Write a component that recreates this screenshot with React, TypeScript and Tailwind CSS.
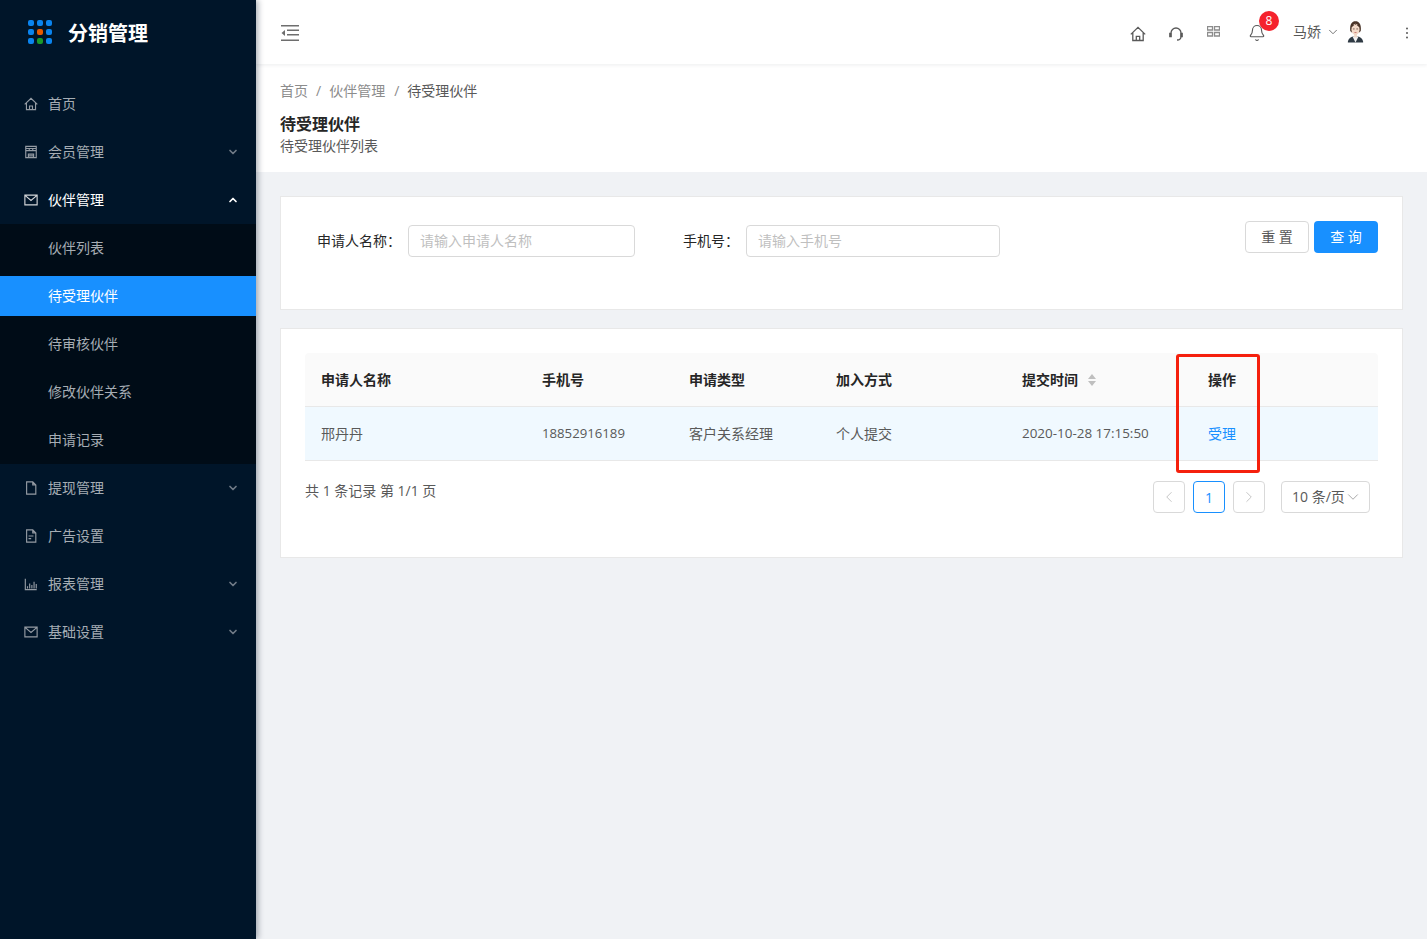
import React from "react";
import { ChevronDown, ChevronUp, ChevronLeft, ChevronRight, Bell } from "lucide-react";

const FONT = { fontFamily: '"Open Sans","Noto Sans CJK SC","Liberation Sans",sans-serif' };

function Glyph({ d, size = 16 }: { d: string; size?: number }) {
  return (
    <svg width={size} height={size} viewBox="0 0 16 16" fill="none" stroke="currentColor" strokeWidth="1.3" strokeLinejoin="miter">
      <path d={d} />
    </svg>
  );
}

const ICONS = {
  home: "M0.8 8.4L8 1.4l7.2 7M2.8 6.8v7.7h10.4V6.8M6.3 14.5v-4.2h3.4v4.2",
  store: "M2 1.5h12v5H2zM2 6.5v8h12v-8M2 4h12M5 14.5v-4h6v4M5 12.5h6M6 6.5v-2.500M10 6.500V4",
  mail: "M1 2.500h14v11H1zM1.500 3l6.500 5.500L14.500 3",
  file: "M3 1h7l3.500 3.500V15H3zM10 1v3.500h3.500",
  doc: "M3 1h7l3.500 3.500V15H3zM10 1v3.500h3.500M5.200 8h5.600M5.200 11h3",
  chart: "M1.500 2v12.500h13M4 13v-2.500M6.500 13V7.500M9 13V9M11.500 13V5.500M14 13V8",
  headset: "M3 9.500V7a5 5 0 0 1 10 0v3.500M13 10.500c0 2-1.500 3.500-4 3.500M1.800 7.500h1.400v3H1.800zM12.800 7.500h1.400v3h-1.400z",
};

function Item({ d, label, chevron, active }: { d: string; label: string; chevron?: "up" | "down"; active?: boolean }) {
  return (
    <div className={`h-12 flex items-center pl-6 pr-[17px] text-[14px] ${active ? "text-white" : "text-[#a6adb4]"}`}>
      <span className={`w-[14px] h-[14px] mr-[10px] flex items-center justify-center shrink-0 ${active ? "text-[#d4d7da]" : "text-[#959ca4]"}`}>
        <Glyph d={d} />
      </span>
      <span className="flex-1 pb-[2px]">{label}</span>
      {chevron === "down" && <ChevronDown size={12} strokeWidth={3.4} className="text-[#6f7a86]" />}
      {chevron === "up" && <ChevronUp size={12} strokeWidth={3.4} className="text-white" />}
    </div>
  );
}

function Sub({ label, selected }: { label: string; selected?: boolean }) {
  return (
    <div className={`h-10 my-1 flex items-center pl-12 pb-[2px] text-[14px] ${selected ? "bg-[#1890ff] text-white" : "text-[#a6adb4]"}`}>{label}</div>
  );
}

function Logo() {
  const colors = ["#0a84ee", "#0a84ee", "#0a84ee", "#0a84ee", "#e85a00", "#0a84ee", "#0a84ee", "#1a9a2a", "#0a84ee"];
  return (
    <div className="grid grid-cols-3 gap-[3px] w-[24px]">
      {colors.map((c, i) => (
        <span key={i} className="w-[6px] h-[6px] rounded-[2px]" style={{ background: c }} />
      ))}
    </div>
  );
}

function Avatar() {
  return (
    <svg width="17" height="23" viewBox="0 0 20 26">
      <path d="M1 26c0-4 3-6 6-7h6c3 1 6 3 6 7z" fill="#2f3a44" />
      <path d="M6.500 19l3.500 7 3.500-7z" fill="#f4f4f4" />
      <path d="M3.800 12C3 4 6 1 10 1s7 3 6.200 11l-1.200 2H5z" fill="#4a3428" />
      <ellipse cx="10" cy="10.500" rx="4.800" ry="6.500" fill="#f2d9c8" />
      <path d="M5.200 8C7 7 9 5.500 10 4c1 1.500 3 3 4.800 4V5H5.200z" fill="#4a3428" />
      <rect x="8.400" y="15" width="3.200" height="5" fill="#f2d9c8" />
      <path d="M7 10h2M11 10h2" stroke="#4a3428" strokeWidth="0.8" />
      <path d="M8.800 14.200h2.400" stroke="#b9534f" strokeWidth="0.8" />
    </svg>
  );
}

const COLS = "grid grid-cols-[221px_147px_147px_186px_186px_1fr] items-center";

function PageBtn({ children, current }: { children: React.ReactNode; current?: boolean }) {
  return (
    <div className={`w-8 h-8 rounded-[4px] border flex items-center justify-center text-[14px] ${current ? "border-[#1890ff] text-[#1890ff]" : "border-[#d9d9d9] text-[#bfbfbf]"}`}>{children}</div>
  );
}

export default function App() {
  return (
    <div style={FONT} className="relative flex w-[1427px] h-[939px] overflow-hidden bg-[#f0f2f5] text-[14px] text-[#595959]">
      <aside className="w-[256px] shrink-0 bg-[#001529] shadow-[2px_0_6px_rgba(0,21,41,0.35)] z-20">
        <div className="h-16 flex items-center pl-[28px]">
          <Logo />
          <span className="ml-[16px] pt-[4px] text-[20px] font-bold text-white leading-none">分销管理</span>
        </div>
        <div className="pt-4">
          <Item d={ICONS.home} label="首页" />
          <Item d={ICONS.store} label="会员管理" chevron="down" />
          <Item d={ICONS.mail} label="伙伴管理" chevron="up" active />
          <div className="bg-[#000c17] h-[240px] flex flex-col">
            <Sub label="伙伴列表" />
            <Sub label="待受理伙伴" selected />
            <Sub label="待审核伙伴" />
            <Sub label="修改伙伴关系" />
            <Sub label="申请记录" />
          </div>
          <Item d={ICONS.file} label="提现管理" chevron="down" />
          <Item d={ICONS.doc} label="广告设置" />
          <Item d={ICONS.chart} label="报表管理" chevron="down" />
          <Item d={ICONS.mail} label="基础设置" chevron="down" />
        </div>
      </aside>

      <main className="flex-1 min-w-0 flex flex-col">
        <header className="relative z-10 h-16 shrink-0 bg-white shadow-[0_1px_4px_rgba(0,21,41,0.08)] flex items-center pl-[25px] pr-[18px]">
          <svg width="18" height="16" viewBox="0 0 18 16" className="text-[#6e6e6e] mt-[2px]">
            <path d="M0 0.750h18M6 5.250h12M6 9.750h12M0 15.250h18" stroke="currentColor" strokeWidth="1.700" fill="none" />
            <path d="M4 5v6L0.500 8z" fill="currentColor" />
          </svg>
          <div className="flex-1" />
          <span className="text-[#595959] mt-[3px] mr-[22px] flex"><Glyph d={ICONS.home} /></span>
          <span className="text-[#595959] mt-[3px] mr-[23px] flex"><Glyph d={ICONS.headset} /></span>
          <svg width="13" height="11" viewBox="0 0 13 11" className="text-[#8c8c8c] mr-[28px] -mt-[1px]">
            <path d="M.5.5h5v3.500h-5zM7.500.5h5v3.500h-5zM.5 6.500h5V10h-5zM7.500 6.500h5V10h-5z" fill="none" stroke="currentColor" strokeWidth="1.300" />
          </svg>
          <div className="relative mr-[27px] mt-[2px] flex">
            <Bell size={18} strokeWidth={1.5} className="text-[#595959]" />
            <span className="absolute -top-[13px] left-[11px] min-w-5 h-5 rounded-full bg-[#f5222d] text-white text-[12px] leading-5 text-center">8</span>
          </div>
          <span className="text-[14px] text-[#595959] -mt-[1px]">马娇</span>
          <ChevronDown size={14} strokeWidth={1.4} className="text-[#595959] ml-[5px]" />
          <span className="ml-[7px] -mt-[1px] flex"><Avatar /></span>
          <svg width="4" height="12" viewBox="0 0 4 12" className="ml-[41px] text-[#595959] mt-[1px]">
            <circle cx="2" cy="1.500" r="1" fill="currentColor" />
            <circle cx="2" cy="6" r="1" fill="currentColor" />
            <circle cx="2" cy="10.500" r="1" fill="currentColor" />
          </svg>
        </header>

        <section className="h-[108px] shrink-0 bg-white px-6 pt-4">
          <div className="flex items-center h-[22px] text-[14px] leading-[22px] text-[#8c8c8c]">
            <span>首页</span>
            <span className="mx-2">/</span>
            <span>伙伴管理</span>
            <span className="ml-[9px] mr-2">/</span>
            <span className="text-[#595959]">待受理伙伴</span>
          </div>
          <div className="mt-[11px] text-[16px] font-bold leading-[22px] text-[#262626]">待受理伙伴</div>
          <div className="text-[14px] leading-[22px] text-[#595959]">待受理伙伴列表</div>
        </section>

        <div className="flex-1 pt-6 pl-6 pr-6 flex flex-col">
          <div className="h-[114px] bg-white border border-[#e8e8e8] flex px-6 pt-6">
            <div className="flex items-center h-8 mt-[4px]">
              <span className="ml-[12px] w-[91px] pb-[2px] text-[#262626] whitespace-nowrap">申请人名称：</span>
              <div className="w-[227px] h-8 rounded-[4px] border border-[#d9d9d9] pl-[11px] pb-[2px] flex items-center text-[#bfbfbf]">请输入申请人名称</div>
              <span className="ml-[48px] w-[63px] pb-[2px] text-[#262626] whitespace-nowrap">手机号：</span>
              <div className="w-[254px] h-8 rounded-[4px] border border-[#d9d9d9] pl-[11px] pb-[2px] flex items-center text-[#bfbfbf]">请输入手机号</div>
            </div>
            <div className="flex-1" />
            <div className="flex gap-[5px]">
              <div className="w-16 h-8 rounded-[4px] border border-[#d9d9d9] pb-[2px] flex items-center justify-center text-[#595959]">重 置</div>
              <div className="w-16 h-8 rounded-[4px] bg-[#1890ff] pb-[2px] flex items-center justify-center text-white">查 询</div>
            </div>
          </div>

          <div className="mt-[18px] h-[230px] bg-white border border-[#e8e8e8] px-6 pt-6">
            <div className={`${COLS} h-[54px] bg-[#fafafa] border-b border-[#e8e8e8] rounded-t-[4px] font-bold text-[#262626]`}>
              <div className="pl-4">申请人名称</div>
              <div className="pl-4">手机号</div>
              <div className="pl-4">申请类型</div>
              <div className="pl-4">加入方式</div>
              <div className="pl-4 flex items-center">
                提交时间
                <svg width="10" height="14" viewBox="0 0 10 14" className="ml-[9px] text-[#bfbfbf]">
                  <path d="M5 1l4 5H1zM5 13L1 8h8z" fill="currentColor" />
                </svg>
              </div>
              <div className="pl-4">操作</div>
            </div>
            <div className={`${COLS} h-[54px] bg-[#f0f9ff] border-b border-[#e8e8e8]`}>
              <div className="pl-4">邢丹丹</div>
              <div className="pl-4 text-[13.2px]">18852916189</div>
              <div className="pl-4">客户关系经理</div>
              <div className="pl-4">个人提交</div>
              <div className="pl-4 whitespace-nowrap text-[13.45px]">2020-10-28 17:15:50</div>
              <div className="pl-4 text-[#1890ff]">受理</div>
            </div>
            <div className="flex items-start mt-5">
              <span className="-mt-px leading-[22px]">共 1 条记录 第 1/1 页</span>
              <div className="flex-1" />
              <div className="flex items-center gap-2 pr-2">
                <PageBtn><ChevronLeft size={18} strokeWidth={1.2} /></PageBtn>
                <PageBtn current>1</PageBtn>
                <PageBtn><ChevronRight size={18} strokeWidth={1.2} /></PageBtn>
                <div className="ml-2 w-[89px] h-8 rounded-[4px] border border-[#d9d9d9] flex items-center pl-[10px] whitespace-nowrap">
                  <span className="pb-[2px]">10 条/页</span>
                  <ChevronDown size={18} strokeWidth={1} className="text-[#8c8c8c] -ml-px" />
                </div>
              </div>
            </div>
          </div>
        </div>
      </main>

      <div className="absolute left-[1176px] top-[354px] w-[84px] h-[119px] border-[3px] border-[#f5200d] rounded-[3px] z-30" />
    </div>
  );
}
